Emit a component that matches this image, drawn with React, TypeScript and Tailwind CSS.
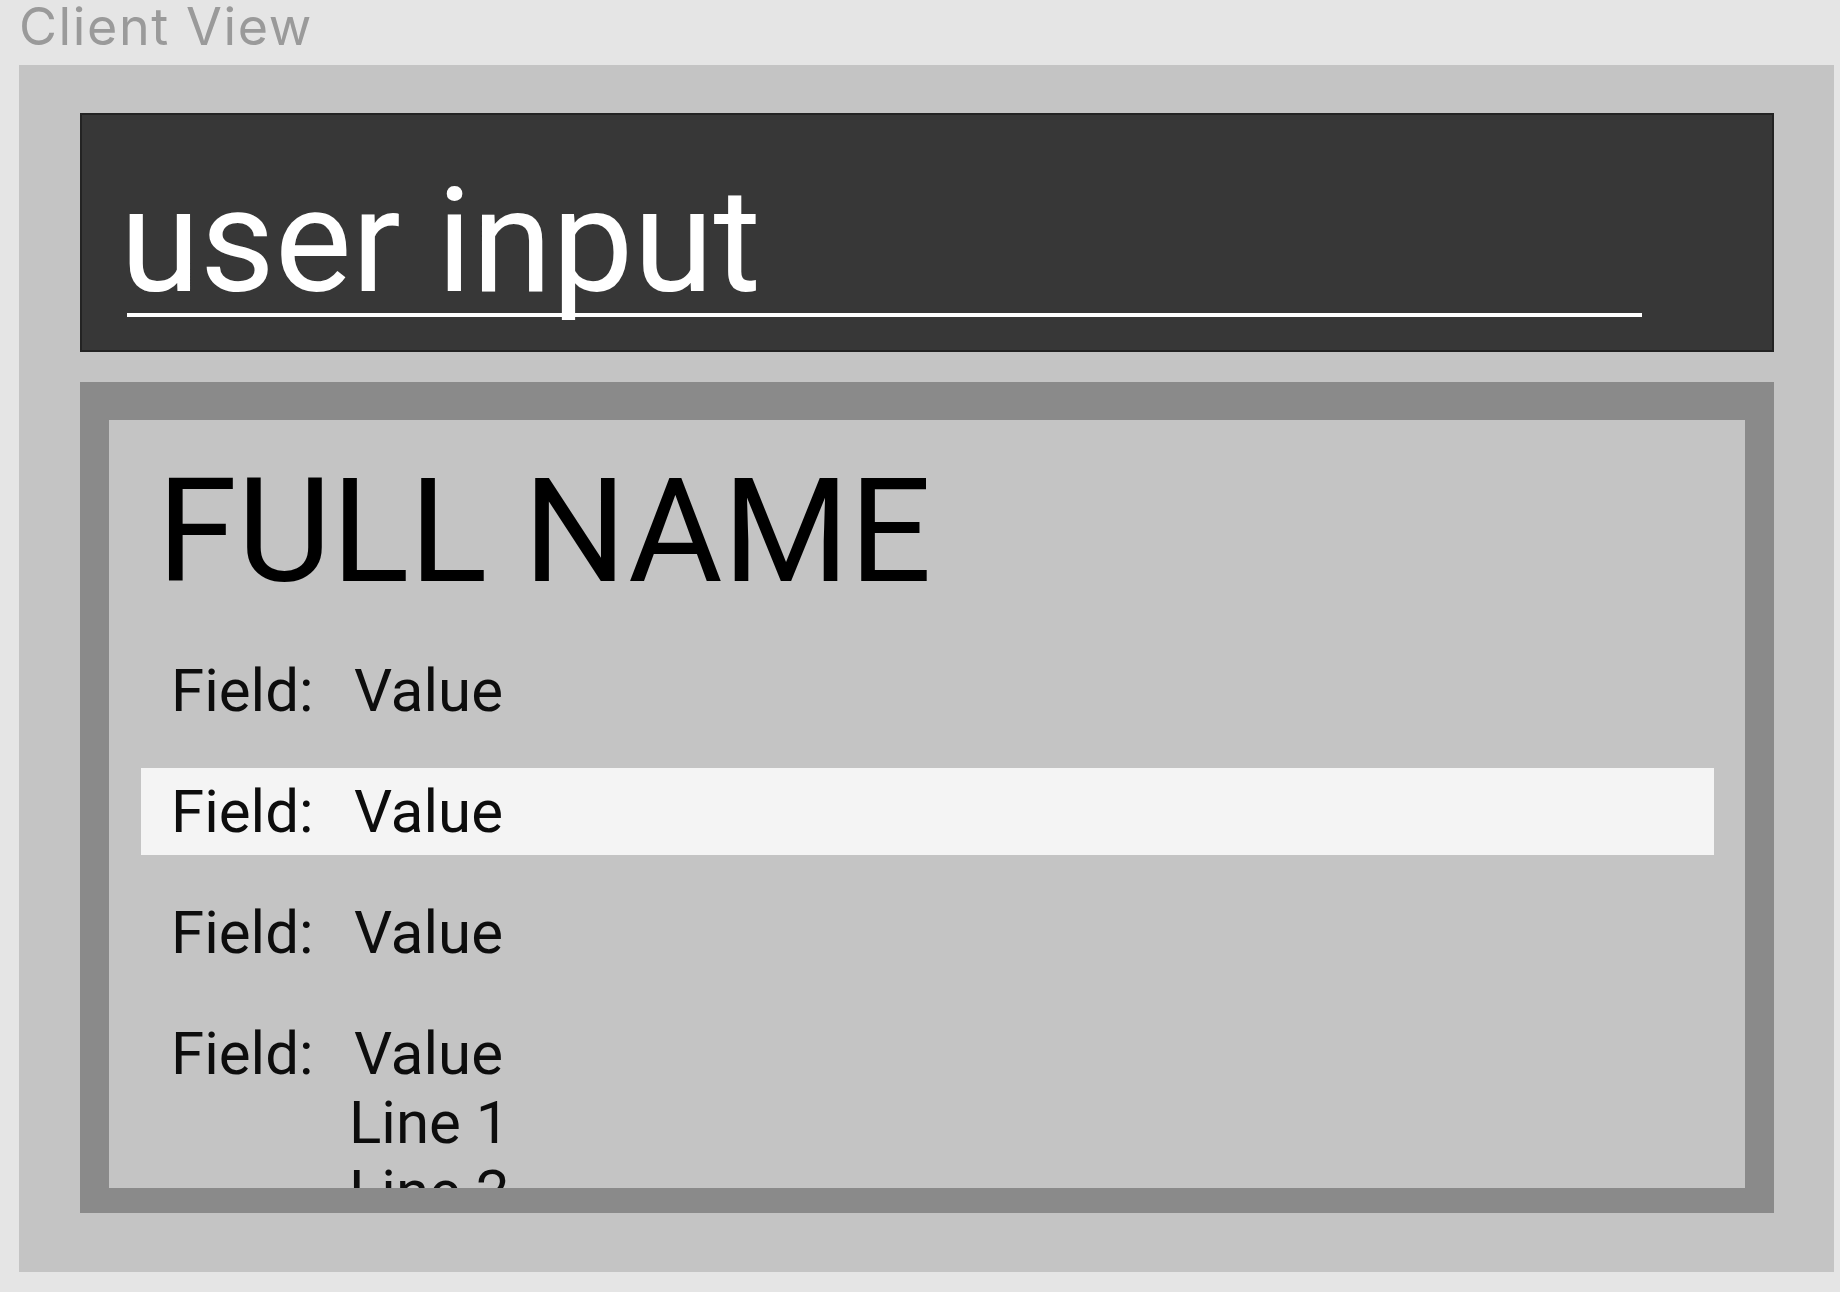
import React from "react";

const rows: { value: string[]; selected?: boolean }[] = [
  { value: ["Value"] },
  { value: ["Value"], selected: true },
  { value: ["Value"] },
  { value: ["Value", "Line 1", "Line 2", "Line 3"] },
];

export default function App() {
  return (
    <div className="w-[1840px] h-[1292px] overflow-hidden bg-[#e5e5e5] pl-[19px]">
      <div className="h-[65px] pt-[1px] text-[52px] leading-none tracking-[1.6px] text-[#9a9a9a] [font-family:Inter,'Liberation_Sans',sans-serif]">
        Client View
      </div>
      <div className="w-[1815px] h-[1207px] bg-[#c4c4c4] pt-[48px] pl-[61px] pr-[60px] flex flex-col gap-[30px] [font-family:Roboto,'Noto_Sans',sans-serif]">
        <div className="h-[239px] bg-[#373737] border-2 border-[#232323] pt-[54px] flex flex-col">
          <div className="h-[144px] pl-[38px] text-[145px] leading-[144px] text-white whitespace-nowrap">
            user input
          </div>
          <div className="ml-[45px] w-[1515px] h-[4px] bg-white" />
        </div>
        <div className="h-[831px] bg-[#c4c4c4] border-[#8a8a8a] border-t-[38px] border-r-[29px] border-b-[25px] border-l-[29px]">
          <div className="h-[768px] overflow-hidden pt-[39px]">
            <div className="pl-[48px] text-[145px] leading-[144px] text-black whitespace-nowrap">
              FULL NAME
            </div>
            <div className="mt-[44px] ml-[32px] mr-[31px] flex flex-col gap-[34px]">
              {rows.map((r, i) => (
                <div
                  key={i}
                  className={
                    r.selected
                      ? "flex py-[9px] pl-[30px] text-[60px] leading-[69px] text-[#0d0d0d] bg-[#f4f4f4]"
                      : "flex py-[9px] pl-[30px] text-[60px] leading-[69px] text-[#0d0d0d]"
                  }
                >
                  <div className="w-[183px] shrink-0">Field:</div>
                  <div className="flex flex-col">
                    {r.value.map((v, j) => (
                      <div
                        key={j}
                        className={j === 0 ? "whitespace-nowrap" : "whitespace-nowrap -ml-[5px]"}
                      >
                        {v}
                      </div>
                    ))}
                  </div>
                </div>
              ))}
            </div>
          </div>
        </div>
      </div>
    </div>
  );
}
